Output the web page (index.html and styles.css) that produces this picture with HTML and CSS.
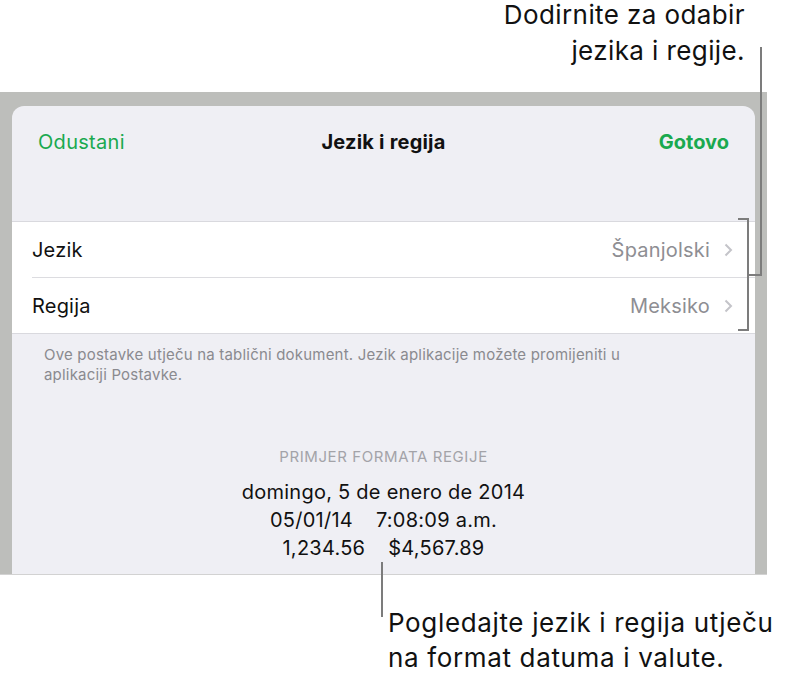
FILE: index.html
```html
<!DOCTYPE html>
<html lang="hr">
  <head>
    <meta charset="UTF-8" />
    <meta name="viewport" content="width=device-width, initial-scale=1.0" />
    <title>Jezik i regija</title>
    <link rel="stylesheet" href="styles.css">
  </head>
  <body>
    <div class="figure">
      <p class="callout callout-top">Dodirnite za odabir<br />jezika i regije.</p>

      <div class="device">
        <div class="sheet">
          <header class="nav">
            <span class="nav-btn">Odustani</span>
            <h1 class="nav-title">Jezik i regija</h1>
            <span class="nav-btn nav-done">Gotovo</span>
          </header>

          <ul class="group">
            <li class="row">
              <span class="row-label">Jezik</span>
              <span class="row-value">Španjolski</span>
              <svg class="chevron" viewBox="0 0 9 14" width="9" height="14">
                <path d="M1.5 1.5 L7 7 L1.5 12.5" />
              </svg>
            </li>
            <li class="row">
              <span class="row-label">Regija</span>
              <span class="row-value">Meksiko</span>
              <svg class="chevron" viewBox="0 0 9 14" width="9" height="14">
                <path d="M1.5 1.5 L7 7 L1.5 12.5" />
              </svg>
            </li>
          </ul>

          <p class="note">
            Ove postavke utječu na tablični dokument. Jezik aplikacije možete promijeniti u<br />
            aplikaciji Postavke.
          </p>

          <section class="sample">
            <h2 class="sample-title">Primjer formata regije</h2>
            <div class="sample-line">domingo, 5 de enero de 2014</div>
            <div class="sample-line"><span>05/01/14</span><span>7:08:09 a.m.</span></div>
            <div class="sample-line"><span>1,234.56</span><span>$4,567.89</span></div>
          </section>
        </div>
      </div>

      <p class="callout callout-bottom">Pogledajte jezik i regija utječu<br />na format datuma i valute.</p>

      <!-- leader lines over the screenshot -->
      <svg class="leaders" viewBox="0 0 788 681" width="788" height="681">
        <polyline points="761,50 761,278 748,278" />
        <polyline points="738,222 748,222 748,333 738,333" />
        <line x1="382" y1="565" x2="382" y2="620" />
      </svg>
    </div>
  </body>
</html>
```

FILE: styles.css
```css
body {
  margin: 0;
  background: #fff;
  font-family: Inter, Roboto, "Liberation Sans", Arial, sans-serif;
  color: #111;
}

.figure {
  position: relative;
  width: 788px;
  height: 681px;
}

.callout {
  margin: 0;
  font-size: 26px;
  line-height: 36px;
  letter-spacing: 0.4px;
  color: #111;
}

.callout-top {
  width: 745px;
  height: 92px;
  text-align: right;
  margin-top: -3px;
  margin-bottom: 3px;
}

.callout-bottom {
  margin-top: 30px;
  padding-left: 388px;
  line-height: 35px;
  letter-spacing: 0.65px;
}

.device {
  width: 767px;
  height: 483px;
  box-sizing: border-box;
  background: #bdbebb;
  padding: 14px 12px 0;
  border-bottom: 1px solid #d2d2d2;
  display: flex;
}

.sheet {
  flex: 1;
  background: #efeff4;
  border-radius: 12px 12px 0 0;
  display: flex;
  flex-direction: column;
}

.nav {
  height: 72px;
  display: flex;
  align-items: center;
  justify-content: space-between;
  padding: 0 26px;
  position: relative;
}

.nav-btn {
  font-size: 20px;
  letter-spacing: 0.3px;
  color: #1aa94f;
}

.nav-done {
  font-weight: 700;
  letter-spacing: 0;
}

.nav-title {
  position: absolute;
  left: 0;
  right: 0;
  margin: 0;
  text-align: center;
  font-size: 20px;
  font-weight: 700;
  letter-spacing: 0.2px;
  pointer-events: none;
}

.group {
  list-style: none;
  margin: 43px 0 0;
  padding: 0 0 0 20px;
  background: #fff;
  border-top: 1px solid #d9d9de;
  border-bottom: 1px solid #d9d9de;
}

.row {
  height: 55px;
  display: flex;
  align-items: center;
  padding-right: 22px;
  font-size: 20px;
  letter-spacing: 0.2px;
}

.row + .row {
  border-top: 1px solid #dcdce0;
}

.row-label {
  flex: 1;
}

.row-value {
  color: #8e8e93;
  margin-right: 14px;
}

.chevron path {
  fill: none;
  stroke: #c4c4c9;
  stroke-width: 2;
}

.note {
  margin: 11px 0 0;
  padding: 0 32px;
  font-size: 15px;
  line-height: 20px;
  letter-spacing: 0.2px;
  color: #8a8a8f;
}

.sample {
  margin-top: 62px;
  text-align: center;
}

.sample-title {
  margin: 0 0 11px;
  font-size: 15px;
  line-height: 20px;
  font-weight: 400;
  letter-spacing: 0.6px;
  text-transform: uppercase;
  color: #a3a3a8;
}

.sample-line {
  font-size: 20px;
  line-height: 28px;
  letter-spacing: 0.25px;
  display: flex;
  justify-content: center;
  gap: 23px;
}

.leaders {
  position: absolute;
  top: 0;
  left: 0;
}

.leaders polyline,
.leaders line {
  fill: none;
  stroke: #7c7c7c;
  stroke-width: 2;
}
```
